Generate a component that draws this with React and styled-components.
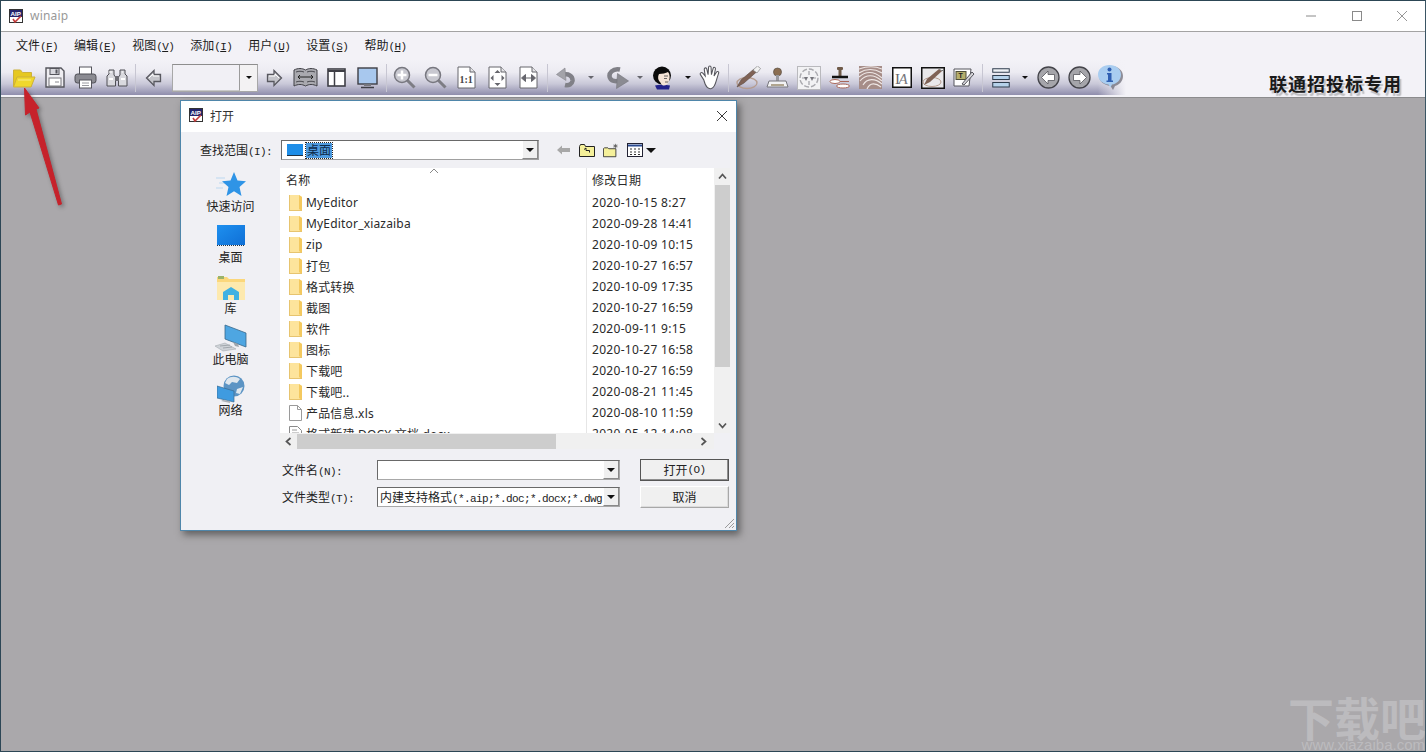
import React from 'react';
import styled, { createGlobalStyle } from 'styled-components';

const GlobalStyle = createGlobalStyle`
  html, body { margin: 0; padding: 0; background: #aaa8ab; }
  body { font-family: "Noto Sans", "Noto Sans CJK SC", sans-serif; font-size: 12px; color: #222; }
`;

const MONO = `"Liberation Mono", "Noto Sans CJK SC", monospace`;

const Screen = styled.div`
  position: relative;
  width: 1426px;
  height: 752px;
  box-sizing: border-box;
  border: 1px solid #2c4655;
  border-right-color: #3a5564;
  overflow: hidden;
  display: flex;
  flex-direction: column;
  background: #aaa8ab;
`;

/* main window chrome */
const TitleBar = styled.div`
  height: 30px;
  display: flex;
  align-items: center;
  background: #fff;
  border-bottom: 1px solid #a3a3a3;
  padding-left: 8px;
`;
const TitleText = styled.span`
  margin-left: 6px;
  margin-top: -2px;
  color: #999;
  font-size: 12px;
  letter-spacing: 0.2px;
`;
const WinButtons = styled.div`
  margin-left: auto;
  display: flex;
`;
const WinButton = styled.div`
  width: 45.5px;
  height: 30px;
  display: flex;
  align-items: center;
  justify-content: center;
`;
const MenuBar = styled.div`
  height: 26px;
  padding: 0 0 2px 15px;
  display: flex;
  align-items: center;
  gap: 16px;
  background: #f3f2f7;
`;
const MenuItem = styled.span`
  font-size: 12px;
  color: #1c1c1c;
  white-space: nowrap;
`;
const Latin = styled.span`
  font-family: ${MONO};
  font-size: 11px;
  letter-spacing: -0.6px;
`;
const Under = styled.span`
  text-decoration: underline;
`;
const ToolArea = styled.div`
  height: 37px;
  position: relative;
  background: #f3f2f7;
  border-bottom: 1px solid #8c8c8e;
`;
const ToolRow = styled.div`
  width: 1125px;
  height: 35px;
  padding-left: 7px;
  box-sizing: border-box;
  display: flex;
  align-items: center;
  background:
    linear-gradient(to right, rgba(243, 242, 247, 0) 97.5%, #f3f2f7 100%),
    linear-gradient(to bottom, #f3f2f7 0%, #ecebf2 35%, #c9c8d8 68%, #8f8dac 100%);
`;
const Slot = styled.div`
  flex: none;
  width: ${(p) => p.$w || 31}px;
  height: 31px;
  display: flex;
  align-items: center;
  justify-content: center;
`;
const Sep = styled.div`
  flex: none;
  width: ${(p) => p.$w || 6}px;
  height: 28px;
  display: flex;
  justify-content: center;
  &::before {
    content: '';
    width: 1px;
    height: 100%;
    background: #c7c6d2;
  }
`;
const Combo = styled.div`
  flex: none;
  width: 86px;
  height: 28px;
  margin: 0 1px 0 3px;
  display: flex;
  border: 1px solid #a8a8a8;
  border-top-color: #8e8e8e;
  box-sizing: border-box;
  background: #f1f0f5;
`;
const ComboField = styled.div`
  flex: 1;
  border-right: 1px solid #9b9b9b;
  border-bottom: 1px solid #c9c9c9;
`;
const ComboBtn = styled.div`
  width: 17px;
  display: flex;
  align-items: center;
  justify-content: center;
  background: #f3f2f3;
`;
const Caret = styled.span`
  flex: none;
  width: 0;
  height: 0;
  margin-left: ${(p) => p.$gap || 0}px;
  border-left: ${(p) => p.$s || 3}px solid transparent;
  border-right: ${(p) => p.$s || 3}px solid transparent;
  border-top: ${(p) => p.$s || 3}px solid ${(p) => p.$c || '#111'};
`;
const Brand = styled.div`
  position: absolute;
  right: 23px;
  top: 11px;
  font-family: "Noto Sans CJK SC", sans-serif;
  font-weight: 700;
  font-size: 18px;
  line-height: 24px;
  letter-spacing: 1px;
  color: #1a1a1a;
  text-shadow: 2px 3px 1px #bdbdc1;
`;
const Workspace = styled.div`
  flex: 1;
  position: relative;
  background: #aaa8ab;
`;

/* open dialog */
const Dialog = styled.div`
  position: absolute;
  left: 179px;
  top: 2px;
  width: 557px;
  height: 431px;
  box-sizing: border-box;
  border: 1px solid #4f86aa;
  background: #f0f0f4;
  box-shadow: 3px 4px 7px rgba(40, 40, 40, 0.55);
  display: flex;
  flex-direction: column;
`;
const DlgTitle = styled.div`
  height: 31px;
  flex: none;
  background: #fff;
  display: flex;
  align-items: center;
  padding: 0 9px 2px 8px;
  box-sizing: border-box;
  font-size: 12px;
  color: #333;
`;
const DlgTitleText = styled.span`
  margin-left: 6px;
  flex: 1;
`;
const LookIn = styled.div`
  height: 36px;
  flex: none;
  display: flex;
  align-items: center;
  padding-left: 19px;
`;
const LookLabel = styled.span`
  width: 81px;
  flex: none;
  font-size: 12px;
`;
const LookCombo = styled.div`
  width: 258px;
  height: 20px;
  flex: none;
  box-sizing: border-box;
  display: flex;
  align-items: center;
  padding-left: 5px;
  background: #fff;
  border: 1px solid #a0a0a0;
  border-top-color: #696969;
  border-left-color: #696969;
`;
const Selected = styled.span`
  margin-left: 3px;
  background: #4f9be0;
  color: #0d2a4a;
  outline: 1px dotted #222;
  padding: 0 1px;
  line-height: 15px;
  font-size: 12px;
`;
const SmallArrow = styled.div`
  margin-left: auto;
  width: 16px;
  height: 18px;
  flex: none;
  display: flex;
  align-items: center;
  justify-content: center;
  background: #f0f0f0;
  box-sizing: border-box;
  border-left: 1px solid #fff;
  border-right: 1px solid #8a8a8a;
  border-bottom: 1px solid #8a8a8a;
`;
const NavIcons = styled.div`
  display: flex;
  align-items: center;
  padding-left: 18px;
  gap: 8px;
`;
const Middle = styled.div`
  height: 281px;
  flex: none;
  display: flex;
`;
const Places = styled.div`
  width: 99px;
  flex: none;
  padding-top: 2px;
`;
const Place = styled.div`
  height: 51px;
  display: flex;
  flex-direction: column;
  align-items: center;
`;
const PlaceIcon = styled.div`
  height: 29px;
  display: flex;
  align-items: center;
  justify-content: center;
`;
const PlaceLabel = styled.span`
  line-height: 16px;
  font-size: 12px;
  color: #222;
`;
const Browser = styled.div`
  width: 450px;
  flex: none;
  display: grid;
  grid-template-columns: 434px 16px;
  grid-template-rows: 265px 16px;
`;
const List = styled.div`
  background: #fff;
  overflow: hidden;
  position: relative;
`;
const Row = styled.div`
  display: flex;
  height: ${(p) => p.$h || 21}px;
  align-items: stretch;
  font-size: 12px;
  color: #2a2a2a;
`;
const NameCell = styled.div`
  width: 306px;
  flex: none;
  box-sizing: border-box;
  padding-left: ${(p) => p.$pad ?? 9}px;
  display: flex;
  align-items: center;
  gap: 4px;
  white-space: nowrap;
  letter-spacing: 0.18px;
`;
const DateCell = styled.div`
  flex: 1;
  border-left: 1px solid #e6e6e6;
  padding-left: 5px;
  display: flex;
  align-items: center;
  white-space: nowrap;
  letter-spacing: 0.3px;
`;
const SortMark = styled.svg`
  position: absolute;
  left: 149px;
  top: 0;
`;
const VScroll = styled.div`
  background: #f0f0f0;
  display: flex;
  flex-direction: column;
  align-items: center;
`;
const ArrowBox = styled.div`
  flex: none;
  width: 16px;
  height: 16px;
  display: flex;
  align-items: center;
  justify-content: center;
`;
const VThumb = styled.div`
  margin-top: 1px;
  width: 15px;
  height: 182px;
  background: #cdcdcd;
`;
const VFill = styled.div`
  flex: 1;
`;
const HScroll = styled.div`
  background: #f0f0f0;
  display: flex;
  align-items: center;
`;
const HThumb = styled.div`
  width: 259px;
  height: 15px;
  margin: 0 auto 0 1px;
  background: #cdcdcd;
`;
const HEnd = styled(ArrowBox)`
  margin-right: 3px;
`;
const Corner = styled.div`
  background: #f0f0f4;
`;
const Form = styled.div`
  padding: 10px 0 0 101px;
  display: grid;
  grid-template-columns: 95px 243px 109px;
  grid-template-rows: 22px 22px;
  row-gap: 5px;
  column-gap: 0;
  align-items: center;
`;
const FormLabel = styled.span`
  font-size: 12px;
  color: #222;
`;
const FormField = styled.div`
  height: 20px;
  box-sizing: border-box;
  background: #fff;
  border: 1px solid #a8a8a8;
  border-top-color: #696969;
  border-left-color: #696969;
  display: flex;
  align-items: center;
  padding-left: 2px;
  overflow: hidden;
  white-space: nowrap;
  font-size: 12px;
`;
const FieldText = styled.span`
  flex: 1;
  overflow: hidden;
`;
const DlgButton = styled.div`
  margin-left: 20px;
  width: 89px;
  height: 22px;
  box-sizing: border-box;
  display: flex;
  align-items: center;
  justify-content: center;
  background: #f0f0f0;
  font-size: 12px;
  color: #222;
  border: 1px solid ${(p) => (p.$main ? '#555' : '#a8a8a8')};
  border-top-color: ${(p) => (p.$main ? '#555' : '#fff')};
  border-left-color: ${(p) => (p.$main ? '#555' : '#fff')};
  box-shadow: inset -1px -1px 0 ${(p) => (p.$main ? '#8f8f8f' : '#dcdcdc')};
`;
const Grip = styled.svg`
  position: absolute;
  right: 1px;
  bottom: 1px;
`;

/* overlays */
const ArrowMark = styled.svg`
  position: absolute;
  left: 0;
  top: 0;
  filter: drop-shadow(2px 2px 2px rgba(40, 40, 40, 0.45));
`;
const Watermark = styled.div`
  position: absolute;
  right: -2px;
  bottom: 0;
  width: 140px;
  text-align: center;
  color: #bcbbbe;
  font-family: "Noto Sans CJK SC", sans-serif;
  font-weight: 700;
`;
const WmBig = styled.div`
  font-size: 46px;
  line-height: 46px;
`;
const WmSmall = styled.div`
  font-family: "Liberation Sans", sans-serif;
  font-weight: 400;
  font-size: 15px;
  line-height: 12px;
  text-align: right;
  padding-right: 2px;
`;

/* ---- drawings ---- */
const AppIcon = () => (
  <svg width="15" height="15" viewBox="0 0 15 15">
    <rect x="0.5" y="0.5" width="13" height="13" fill="#fff" stroke="#333" />
    <rect x="1" y="1" width="12" height="7" fill="#24246e" />
    <text x="1.5" y="7.3" fontSize="6.2" fontWeight="700" fill="#fff" fontFamily="Liberation Sans">AIP</text>
    <path d="M4 10l2 3 6-6" fill="none" stroke="#c23b3b" strokeWidth="1.6" />
  </svg>
);
const Folder = () => (
  <svg width="24" height="22" viewBox="0 0 24 22">
    <path d="M1.500 3h7l2 2.500h9V19h-18z" fill="#e6c820" stroke="#cdb13a" />
    <path d="M5 10h18l-4 10H1.500z" fill="#f0d82c" stroke="#cdb13a" />
    <path d="M6 13h13" stroke="#f8ec8a" />
  </svg>
);
const Save = () => (
  <svg width="20" height="21" viewBox="0 0 20 21">
    <path d="M1 1h15l3 3v16H1z" fill="#eeedf1" stroke="#55555c" strokeWidth="1.400" />
    <rect x="5" y="1.500" width="9" height="6" fill="#d8d8de" stroke="#55555c" />
    <rect x="10.500" y="2.500" width="2" height="4" fill="#55555c" />
    <rect x="4" y="11" width="12" height="8" fill="#fff" stroke="#77777d" />
    <path d="M10 15h4" stroke="#8a8a90" />
  </svg>
);
const Printer = () => (
  <svg width="23" height="23" viewBox="0 0 23 23">
    <rect x="5.500" y="1" width="12" height="8" fill="#fff" stroke="#55555c" />
    <rect x="1" y="8" width="21" height="9" rx="2.500" fill="#8b8b92" stroke="#4e4e55" />
    <rect x="5.500" y="14" width="12" height="8" fill="#fff" stroke="#55555c" />
    <path d="M8 17h7M8 19.500h7" stroke="#9a9aa0" />
  </svg>
);
const Binoculars = () => (
  <svg width="22" height="20" viewBox="0 0 22 20">
    <path d="M3 2h5v5l1.500 2v9H1V8l2-2z" fill="#d9d9de" stroke="#4e4e55" />
    <path d="M14 2h5v4l2 2v10h-8.500V9l1.500-2z" fill="#d9d9de" stroke="#4e4e55" />
    <rect x="9" y="8" width="4" height="5" fill="#6d6d74" />
    <path d="M3 11h4M15 11h4" stroke="#fff" strokeWidth="2" />
    <path d="M3 4h3M16 4h1" stroke="#fff" />
  </svg>
);
const LeftArrow = ({ flip }) => (
  <svg width="17" height="18" viewBox="0 0 17 18" style={flip ? { transform: 'scaleX(-1)' } : undefined}>
    <path d="M1.500 9L9 1.500V5.500h6.500v7H9v4z" fill="#c4c4ca" stroke="#58585f" strokeWidth="1.300" />
    <path d="M4 9l4-4v2h6" fill="none" stroke="#fff" />
  </svg>
);
const Book = () => (
  <svg width="25" height="21" viewBox="0 0 25 21">
    <path d="M1 3c4-2 8-2 11.500 0C16 1 20 1 24 3v16c-4-2-8-2-11.500 0C9 17 5 17 1 19z" fill="#a9a9af" stroke="#3e3e44" />
    <path d="M3 5c3-1 5-1 8 0M14 5c3-1 5-1 8 0M3 15c3-1 5-1 8 0M14 15c3-1 5-1 8 0" stroke="#4a4a50" fill="none" />
    <path d="M5 10h15M5 10l2-2M5 10l2 2M20 10l-2-2M20 10l-2 2" stroke="#222" fill="none" />
  </svg>
);
const Panel = () => (
  <svg width="19" height="19" viewBox="0 0 19 19">
    <rect x="1" y="1" width="17" height="17" fill="#fff" stroke="#3e3e45" strokeWidth="1.600" />
    <path d="M1 3h17" stroke="#3e3e45" strokeWidth="2" />
    <path d="M7.500 3v15" stroke="#3e3e45" strokeWidth="1.500" />
  </svg>
);
const Monitor = () => (
  <svg width="21" height="22" viewBox="0 0 21 22">
    <rect x="1" y="1" width="19" height="16" fill="#a8c8ee" stroke="#3e3e45" strokeWidth="1.400" />
    <rect x="7" y="17" width="7" height="2" fill="#77777d" />
    <path d="M4 20.500h13" stroke="#3e3e45" strokeWidth="1.500" />
  </svg>
);
const Zoom = ({ plus }) => (
  <svg width="23" height="23" viewBox="0 0 23 23">
    <path d="M14 14l7.500 7.500" stroke="#7d7d84" strokeWidth="3" />
    <circle cx="9" cy="9" r="7.500" fill="#c8c8d0" stroke="#77777f" strokeWidth="1.500" />
    <path d={plus ? 'M4.500 9h9M9 4.500v9' : 'M4.500 9h9'} stroke="#fff" strokeWidth="2.500" />
  </svg>
);
const Page = ({ children }) => (
  <svg width="19" height="23" viewBox="0 0 19 23">
    <path d="M1 1h12l5 5v16H1z" fill="#fff" stroke="#66666d" />
    <path d="M13 1v5h5" fill="#e5e5e8" stroke="#66666d" />
    {children}
  </svg>
);
const Undo = () => (
  <svg width="20" height="21" viewBox="0 0 20 21">
    <path d="M7 8c5-2 10 1 9.500 6-.5 3-3.500 5-7.500 4" fill="none" stroke="#808087" strokeWidth="4.500" />
    <path d="M0.500 7.500L9 1l1 12.500z" fill="#a3a3a9" stroke="#85858c" strokeWidth="0.600" />
  </svg>
);
const Redo = () => (
  <svg width="24" height="24" viewBox="0 0 24 24">
    <path d="M15 3.500C8 2 3 7 5 12c1 2.500 4 3.500 8 3" fill="none" stroke="#808087" strokeWidth="4.500" />
    <path d="M23.500 15l-11-7.500-1 15z" fill="#8b8b92" stroke="#74747b" strokeWidth="0.600" />
  </svg>
);
const Face = () => (
  <svg width="19" height="24" viewBox="0 0 19 24">
    <path d="M2 19.500c3-1 11-1 15 0l-1 4H4z" fill="#22228a" />
    <circle cx="9" cy="9.500" r="9" fill="#0a0a0a" />
    <path d="M6 8c3 0 7-1 9-2 2 2 2 6 1 9-1 3-3 5-6 4.500-2-.500-2-3-3.500-4-1.500-1.500-2-5-.500-7.500z" fill="#f4e3d6" />
    <path d="M11 10h4M11 12.500h3M12 16h3" stroke="#444" strokeWidth="0.800" />
  </svg>
);
const Hand = () => (
  <svg width="23" height="25" viewBox="0 0 23 25">
    <path d="M5 15L1.500 9.500c-1-1.500 1-3 2.500-1.500L6.500 11 5.500 4c-.2-1.800 2.300-2.200 2.600-.4L9.500 9.500 10 1.800c.1-1.800 2.500-1.800 2.600 0L13 9.500l1.800-6.600c.5-1.700 2.800-1.100 2.400.6L15.700 11l2.500-4c1-1.500 3-.5 2.300 1L18 16c-1 4-2.500 7-5 8-3 .8-6-1-8-9z" fill="#fff" stroke="#55555c" strokeWidth="1.100" />
  </svg>
);
const Pen = () => (
  <svg width="25" height="24" viewBox="0 0 25 24">
    <ellipse cx="11" cy="17" rx="10" ry="5.500" fill="none" stroke="#b59c8f" strokeWidth="1.300" />
    <path d="M1 21l4-7L18 3l3 2.500L8 17z" fill="#7f6255" stroke="#5b4a42" strokeWidth="0.600" />
    <path d="M17 4l4 3 3.500-4.500L21.500 0z" fill="#f2f2f2" stroke="#777" strokeWidth="0.600" />
  </svg>
);
const Joystick = () => (
  <svg width="23" height="22" viewBox="0 0 23 22">
    <circle cx="11.500" cy="5" r="4" fill="#8b6e52" stroke="#5c5247" strokeWidth="0.700" />
    <rect x="10" y="8" width="3" height="6" fill="#9a9aa0" />
    <path d="M1 20l2-6h17l2 6z" fill="#f2f2f4" stroke="#77777d" />
    <path d="M5 18h13" stroke="#b0a58f" strokeWidth="2" />
  </svg>
);
const Target = () => (
  <svg width="24" height="24" viewBox="0 0 24 24">
    <rect x="0.500" y="0.500" width="23" height="23" fill="#f2f2f4" stroke="#b9b9bd" />
    <circle cx="12" cy="12" r="9" fill="none" stroke="#a9a9ae" strokeDasharray="5 2" strokeWidth="1.400" />
    <path d="M12 5v4M12 15v4M5 12h4M15 12h4" stroke="#a0a0a6" strokeWidth="1.200" />
    <path d="M7 11h4l-2 4zM13 11h4l-2 4z" fill="#77777d" />
  </svg>
);
const Stamp = () => (
  <svg width="22" height="24" viewBox="0 0 22 24">
    <rect x="8" y="1" width="6" height="3" rx="1" fill="#6f5a49" />
    <rect x="9.500" y="3" width="3" height="7" fill="#6f5a49" />
    <path d="M3 11h16" stroke="#111" strokeWidth="2.500" />
    <ellipse cx="6" cy="15.500" rx="5" ry="2" fill="#fff" stroke="#a9685a" />
    <ellipse cx="14" cy="20" rx="6.500" ry="2" fill="#fff" stroke="#a9685a" />
    <path d="M11 15.500h9" stroke="#a9685a" />
  </svg>
);
const Print = () => (
  <svg width="23" height="23" viewBox="0 0 23 23">
    <rect width="23" height="23" fill="#a68d88" />
    <path d="M0 3c8-3 16-3 23 0M0 7c8-5 16-4 23 0M0 11c8-7 16-5 23 1M1 15c6-7 14-7 22 0M4 19c4-7 12-7 19-1M8 23c3-7 9-6 14-2" fill="none" stroke="#efe8e6" strokeWidth="1.100" />
  </svg>
);
const TextBox = () => (
  <svg width="20" height="21" viewBox="0 0 20 21">
    <rect x="0.750" y="0.750" width="18.500" height="19.500" fill="#fff" stroke="#111" strokeWidth="1.500" />
    <text x="3" y="16.500" fontSize="15" fontFamily="Liberation Serif" fill="#66666d">I</text>
    <text x="6.500" y="16.500" fontSize="15" fontStyle="italic" fontFamily="Liberation Serif" fill="#77777d">A</text>
  </svg>
);
const PenBox = () => (
  <svg width="24" height="22" viewBox="0 0 24 22">
    <rect x="0.750" y="0.750" width="22.500" height="20.500" fill="#e9e8ea" stroke="#111" strokeWidth="1.500" />
    <ellipse cx="11" cy="15" rx="9" ry="4.500" fill="none" stroke="#b59c8f" />
    <path d="M3 18l3-6L18 2l3 2L9 15z" fill="#7f6255" />
    <path d="M18 2l3 2 2-2" fill="#eee" stroke="#777" />
  </svg>
);
const Note = () => (
  <svg width="22" height="20" viewBox="0 0 22 20">
    <path d="M1 1h17l-2 17H1z" fill="#fff" stroke="#55555c" />
    <rect x="3" y="3.500" width="10" height="8" fill="#b5ae6c" stroke="#4f4f3a" />
    <text x="5.500" y="10" fontSize="7" fontWeight="700" fontFamily="Liberation Sans" fill="#222">T</text>
    <path d="M9 16l10-12 2 2-10 11z" fill="#d5d5da" stroke="#55555c" />
  </svg>
);
const Lines = () => (
  <svg width="18" height="20" viewBox="0 0 18 20">
    <rect x="0.750" y="0.750" width="16.500" height="3.500" fill="#eef1f5" stroke="#2f3d4d" />
    <rect x="0.750" y="7.500" width="16.500" height="4" fill="#b6d2ea" stroke="#2f3d4d" />
    <rect x="0.750" y="14.500" width="16.500" height="4.500" fill="#b6d2ea" stroke="#2f3d4d" />
  </svg>
);
const CircleNav = ({ flip }) => (
  <svg width="23" height="23" viewBox="0 0 23 23" style={flip ? { transform: 'scaleX(-1)' } : undefined}>
    <circle cx="11.500" cy="11.500" r="10.500" fill="#a5a5aa" stroke="#44444a" strokeWidth="1.300" />
    <path d="M4.500 11.500L11 5v3.500h6.500v6H11V18z" fill="#fff" stroke="#55555c" strokeWidth="0.800" />
  </svg>
);
const Info = () => (
  <svg width="26" height="26" viewBox="0 0 26 26">
    <path d="M13 1c7 0 12 4.500 12 10s-4 9-8 10l-2 4-2.500-4C6 20 1 16.500 1 11S6 1 13 1z" fill="#6d6c78" opacity="0.750" />
    <path d="M11.500 0C18 0 23 4 23 9.500S18.500 19 14 19.500l-1.500 3-2-3C5 19 0 15 0 9.500S5 0 11.500 0z" fill="#a9cdf0" />
    <circle cx="11.500" cy="4.500" r="2" fill="#2f5fb2" />
    <path d="M9 8h4.500v7.500H15V17H8.500v-1.500H10V9.500H9z" fill="#2f5fb2" />
  </svg>
);

const Star = () => (
  <svg width="30" height="26" viewBox="0 0 30 26">
    <path d="M0 6h9M3 11h6M0 16h7" stroke="#bcd8ef" strokeWidth="1.200" />
    <path d="M18 0l3.500 8.500 8.500.8-6.500 5.700 2 9-7.500-4.700-7.500 4.700 2-9L6 9.300l8.500-.8z" fill="#2f94e6" />
  </svg>
);
const Desktop = () => (
  <svg width="28" height="22" viewBox="0 0 28 22">
    <defs>
      <linearGradient id="desk" x1="0" y1="0" x2="1" y2="1">
        <stop offset="0" stopColor="#1e90ef" />
        <stop offset="1" stopColor="#0f6fd6" />
      </linearGradient>
    </defs>
    <rect width="28" height="20" fill="url(#desk)" />
    <path d="M0 20.500h28" stroke="#234" strokeDasharray="1 1" />
  </svg>
);
const Library = () => (
  <svg width="30" height="26" viewBox="0 0 30 26">
    <path d="M1 3h10l2 2h16v21H1z" fill="#fbd77b" />
    <path d="M1 8h28v18H1z" fill="#fde9ae" />
    <rect x="2" y="2" width="6" height="3" fill="#9ab36a" />
    <path d="M7 26v-8l8-5 8 5v8h-5v-5h-6v5z" fill="#3fb1e3" />
  </svg>
);
const Computer = () => (
  <svg width="32" height="28" viewBox="0 0 32 28">
    <path d="M10 1l21 8v14l-21-8z" fill="#4ea6e2" stroke="#39688c" strokeWidth="0.800" />
    <path d="M18 18l2 4 4 1-1-3z" fill="#9fa6ad" />
    <path d="M10 19l-10 3 8 5 13-2z" fill="#cfd3d8" stroke="#9aa0a6" strokeWidth="0.500" />
    <path d="M5 22l10-1M8 24l9-1" stroke="#8d9399" strokeWidth="0.700" />
  </svg>
);
const Network = () => (
  <svg width="28" height="28" viewBox="0 0 28 28">
    <circle cx="17" cy="11" r="10.500" fill="#5c94c4" />
    <path d="M10 4c4-3 9-3 13 0l-3 4-5-1-3 3-4-2zM20 14l6-2-3 7-4-1z" fill="#dfe7ee" />
    <path d="M0 11l17 5v11L0 23z" fill="#3f9be0" stroke="#3a6a8f" strokeWidth="0.700" />
    <path d="M6 25l7 1v2l-9-2z" fill="#a7adb3" />
  </svg>
);
const FileFolder = () => (
  <svg width="13" height="16" viewBox="0 0 13 16">
    <path d="M0 0h10l3 2v14H0z" fill="#fde49c" />
    <path d="M0 0h1v16H0z" fill="#e7c46f" />
    <path d="M10 0v14l3 2V2z" fill="#f4c95f" />
    <path d="M0 15.500h13" stroke="#e7c46f" />
  </svg>
);
const DocFile = () => (
  <svg width="13" height="16" viewBox="0 0 13 16">
    <path d="M0.500 0.500h8l4 4v11H0.500z" fill="#fff" stroke="#9a9a9a" />
    <path d="M8.500 0.500v4h4" fill="none" stroke="#9a9a9a" />
  </svg>
);
const DocxFile = () => (
  <svg width="13" height="16" viewBox="0 0 13 16">
    <path d="M0.500 0.500h8l4 4v11H0.500z" fill="#fff" stroke="#8a8a8a" />
    <path d="M3 4h5M3 7h7M3 10h7" stroke="#9a9a9a" />
  </svg>
);
const Chev = ({ d }) => (
  <svg width="9" height="7" viewBox="0 0 9 7">
    <path d={d} fill="none" stroke="#555" strokeWidth="1.700" />
  </svg>
);
const CloseX = ({ c, s }) => (
  <svg width={s} height={s} viewBox="0 0 10 10">
    <path d="M0 0l10 10M10 0L0 10" stroke={c} strokeWidth="0.900" />
  </svg>
);
const NavBack = () => (
  <svg width="14" height="10" viewBox="0 0 14 10">
    <path d="M0 5l5-4.500V3h8v4H5v2.500z" fill="#a8a8a8" />
  </svg>
);
const UpFolder = () => (
  <svg width="16" height="13" viewBox="0 0 16 13">
    <path d="M.500 12.500V2.500l1-2h4l1 2h9v10z" fill="#f5f09a" stroke="#222" />
    <path d="M5 5.500L7 4v2.500h3.500v2" fill="none" stroke="#222" />
  </svg>
);
const NewFolder = () => (
  <svg width="16" height="15" viewBox="0 0 18 15">
    <path d="M.500 14.500v-9l1-1h4l1 1h8v9z" fill="#f5f09a" stroke="#333" />
    <path d="M14 0v5M11.500 2.500h5M12 1l4 3M16 1l-4 3" stroke="#555" strokeWidth="0.800" />
  </svg>
);
const ViewMenu = () => (
  <svg width="16" height="14" viewBox="0 0 16 14">
    <rect x="0.500" y="0.500" width="15" height="13" fill="#fff" stroke="#223" />
    <path d="M1 2.500h14" stroke="#2a4a90" strokeWidth="2" />
    <path d="M3 6h2M7 6h2M11 6h2M3 9h2M7 9h2M11 9h2M3 11.500h2M7 11.500h2M11 11.500h2" stroke="#333" />
  </svg>
);

const Label = ({ zh, hot }) => (
  <>
    {zh}
    <Latin>(<Under>{hot}</Under>)</Latin>
  </>
);

const menus = [
  ['文件', 'F'], ['编辑', 'E'], ['视图', 'V'], ['添加', 'I'],
  ['用户', 'U'], ['设置', 'S'], ['帮助', 'H'],
];

const oneOne = (
  <text x="2.500" y="17" fontSize="10" fontWeight="700" fontFamily="Liberation Serif" fill="#444">1:1</text>
);
const fitPage = (
  <path d="M9.500 4l3 3h-6zM9.500 20l3-3h-6zM2.500 12l3-3v6zM16.500 12l-3-3v6z" fill="#66666d" />
);
const fitWidth = <path d="M2.500 12l4-3.500v7zM16.500 12l-4-3.500v7zM6 12h7" fill="#66666d" stroke="#66666d" />;

const tools = [
  { el: <Folder /> }, { el: <Save /> }, { el: <Printer /> }, { el: <Binoculars /> },
  { sep: 6 },
  { el: <LeftArrow /> },
  { combo: true },
  { el: <LeftArrow flip /> }, { el: <Book /> }, { el: <Panel /> }, { el: <Monitor /> },
  { sep: 6 },
  { el: <Zoom plus /> }, { el: <Zoom /> }, { el: <Page>{oneOne}</Page> }, { el: <Page>{fitPage}</Page> }, { el: <Page>{fitWidth}</Page> },
  { sep: 6 },
  { el: <Undo /> }, { el: <Caret $c="#66666d" />, w: 20 },
  { el: <Redo /> }, { el: <Caret $c="#66666d" />, w: 16 },
  { el: <Face />, w: 29 }, { el: <Caret />, w: 22 },
  { el: <Hand />, w: 22 },
  { sep: 14 },
  { el: <Pen />, w: 27 }, { el: <Joystick /> }, { el: <Target /> }, { el: <Stamp /> }, { el: <Print /> },
  { el: <TextBox /> }, { el: <PenBox /> }, { el: <Note /> },
  { sep: 6 },
  { el: <Lines />, w: 32 }, { el: <Caret />, w: 16 },
  { el: <CircleNav /> }, { el: <CircleNav flip /> }, { el: <Info /> },
];

const places = [
  [<Star key="i" />, '快速访问'],
  [<Desktop key="i" />, '桌面'],
  [<Library key="i" />, '库'],
  [<Computer key="i" />, '此电脑'],
  [<Network key="i" />, '网络'],
];

const files = [
  ['MyEditor', '2020-10-15 8:27'],
  ['MyEditor_xiazaiba', '2020-09-28 14:41'],
  ['zip', '2020-10-09 10:15'],
  ['打包', '2020-10-27 16:57'],
  ['格式转换', '2020-10-09 17:35'],
  ['截图', '2020-10-27 16:59'],
  ['软件', '2020-09-11 9:15'],
  ['图标', '2020-10-27 16:58'],
  ['下载吧', '2020-10-27 16:59'],
  ['下载吧..', '2020-08-21 11:45'],
  ['产品信息.xls', '2020-08-10 11:59', 'doc'],
  ['格式新建 DOCX 文档.docx', '2020-05-12 14:08', 'docx'],
];

export default function App() {
  return (
    <>
      <GlobalStyle />
      <Screen>
        <TitleBar>
          <AppIcon />
          <TitleText>winaip</TitleText>
          <WinButtons>
            <WinButton>
              <svg width="10" height="2"><path d="M0 1h10" stroke="#8a8a8a" /></svg>
            </WinButton>
            <WinButton>
              <svg width="10" height="10"><rect x="0.500" y="0.500" width="9" height="9" fill="none" stroke="#8a8a8a" /></svg>
            </WinButton>
            <WinButton><CloseX c="#8a8a8a" s={10} /></WinButton>
          </WinButtons>
        </TitleBar>
        <MenuBar>
          {menus.map(([zh, k]) => (
            <MenuItem key={k}><Label zh={zh} hot={k} /></MenuItem>
          ))}
        </MenuBar>
        <ToolArea>
          <ToolRow>
            {tools.map((t, i) => {
              if (t.sep) return <Sep key={i} $w={t.sep} />;
              if (t.combo) {
                return (
                  <Combo key={i}>
                    <ComboField />
                    <ComboBtn><Caret /></ComboBtn>
                  </Combo>
                );
              }
              return <Slot key={i} $w={t.w}>{t.el}</Slot>;
            })}
          </ToolRow>
          <Brand>联通招投标专用</Brand>
        </ToolArea>
        <Workspace>
          <Dialog>
            <DlgTitle>
              <AppIcon />
              <DlgTitleText>打开</DlgTitleText>
              <CloseX c="#222" s={10} />
            </DlgTitle>
            <LookIn>
              <LookLabel>查找范围<Latin>(I):</Latin></LookLabel>
              <LookCombo>
                <svg width="16" height="12"><rect width="16" height="11" fill="#1e8ee8" /><path d="M0 11.500h16" stroke="#234" /></svg>
                <Selected>桌面</Selected>
                <SmallArrow><Caret $s={4} /></SmallArrow>
              </LookCombo>
              <NavIcons>
                <NavBack />
                <UpFolder />
                <NewFolder />
                <ViewMenu />
                <Caret $s={5} $gap={-5} />
              </NavIcons>
            </LookIn>
            <Middle>
              <Places>
                {places.map(([icon, label]) => (
                  <Place key={label}>
                    <PlaceIcon>{icon}</PlaceIcon>
                    <PlaceLabel>{label}</PlaceLabel>
                  </Place>
                ))}
              </Places>
              <Browser>
                <List>
                  <SortMark width="10" height="6" viewBox="0 0 10 6"><path d="M1 5l4-4 4 4" fill="none" stroke="#888" /></SortMark>
                  <Row $h={24}>
                    <NameCell $pad={6}>名称</NameCell>
                    <DateCell>修改日期</DateCell>
                  </Row>
                  {files.map(([name, date, kind]) => (
                    <Row key={name}>
                      <NameCell>
                        {kind === 'doc' ? <DocFile /> : kind === 'docx' ? <DocxFile /> : <FileFolder />}
                        {name}
                      </NameCell>
                      <DateCell>{date}</DateCell>
                    </Row>
                  ))}
                </List>
                <VScroll>
                  <ArrowBox><Chev d="M1 5.500l3.500-4 3.500 4" /></ArrowBox>
                  <VThumb />
                  <VFill />
                  <ArrowBox><Chev d="M1 1.500l3.500 4 3.500-4" /></ArrowBox>
                </VScroll>
                <HScroll>
                  <ArrowBox><svg width="7" height="9" viewBox="0 0 7 9"><path d="M5.500 1l-4 3.500 4 3.500" fill="none" stroke="#555" strokeWidth="1.700" /></svg></ArrowBox>
                  <HThumb />
                  <HEnd><svg width="7" height="9" viewBox="0 0 7 9"><path d="M1.500 1l4 3.500-4 3.500" fill="none" stroke="#555" strokeWidth="1.700" /></svg></HEnd>
                </HScroll>
                <Corner />
              </Browser>
            </Middle>
            <Form>
              <FormLabel>文件名<Latin>(N):</Latin></FormLabel>
              <FormField>
                <FieldText />
                <SmallArrow><Caret $s={4} /></SmallArrow>
              </FormField>
              <DlgButton $main>打开<Latin>(O)</Latin></DlgButton>
              <FormLabel>文件类型<Latin>(T):</Latin></FormLabel>
              <FormField>
                <FieldText>内建支持格式<Latin>(*.aip;*.doc;*.docx;*.dwg</Latin></FieldText>
                <SmallArrow><Caret $s={4} /></SmallArrow>
              </FormField>
              <DlgButton>取消</DlgButton>
            </Form>
            <Grip width="12" height="12" viewBox="0 0 12 12">
              <path d="M11 2L2 11M11 6l-5 5M11 9l-2 2" stroke="#9a9a9a" />
            </Grip>
          </Dialog>
          <Watermark>
            <WmBig>下载吧</WmBig>
            <WmSmall>www.xiazaiba.com</WmSmall>
          </Watermark>
        </Workspace>
        <ArrowMark width="80" height="220" viewBox="0 0 80 220">
          <path d="M23.500 87L24.500 114 29 111 57.500 204 60.500 203 35 108 38 107z" fill="#c6222b" stroke="#c6222b" strokeWidth="1" />
        </ArrowMark>
      </Screen>
    </>
  );
}
